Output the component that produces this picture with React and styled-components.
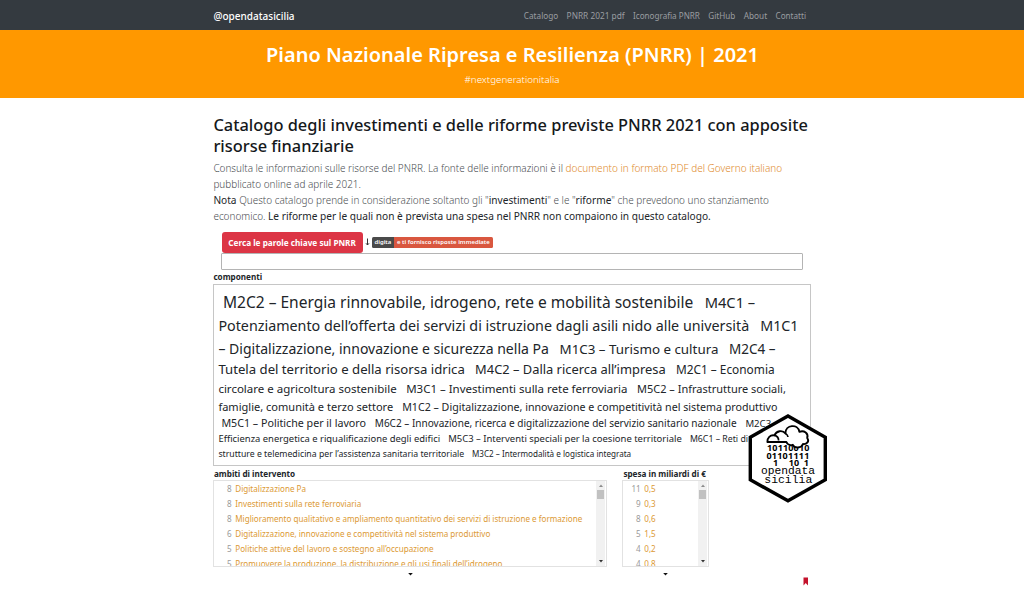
import React from "react";
import styled, { createGlobalStyle } from "styled-components";

const Global = createGlobalStyle`
  *, *::before, *::after { box-sizing: border-box; }
  body {
    margin: 0;
    background: #fff;
    color: #212529;
    font-family: "Noto Sans", "Open Sans", sans-serif;
    overflow: hidden;
  }
`;

const Page = styled.div`
  height: 589px;
  overflow: hidden;
`;

const NavBar = styled.nav`
  display: flex;
  justify-content: space-between;
  align-items: center;
  height: 30px;
  padding: 1px 218px 0 213.5px;
  background: #343a40;
`;

const Brand = styled.a`
  font-size: 10px;
  font-weight: 500;
  line-height: 14px;
  color: #fff;
`;

const NavLinks = styled.div`
  display: flex;
  gap: 8.4px;
`;

const NavLink = styled.a`
  font-size: ${(p) => p.$size || 8.2}px;
  line-height: 12px;
  color: #9a9da0;
  white-space: nowrap;
`;

const Banner = styled.header`
  height: 68px;
  padding-top: 11px;
  background: #ff9800;
  text-align: center;
  color: #fff;
`;

const BannerTitle = styled.h1`
  margin: 0;
  padding-left: 1px;
  font-size: 19.99px;
  font-weight: 600;
  line-height: 28px;
`;

const BannerTag = styled.p`
  margin: 4px 0 0;
  font-size: 9.8px;
  font-weight: 300;
  line-height: 14px;
`;

const Main = styled.main`
  width: 600px;
  margin: 17px 0 0 213.4px;
`;

const Heading = styled.h2`
  margin: 0;
  color: #15181b;
  font-size: ${(p) => p.$size || 16.4}px;
  font-weight: 500;
  line-height: 20.5px;
  white-space: nowrap;
`;

const Intro = styled.p`
  margin: 4px 0 0;
  font-size: 9.95px;
  font-weight: 300;
  line-height: 16px;
  color: #4a4e52;
  white-space: nowrap;
`;

const Em = styled.span`
  font-size: ${(p) => p.$size || 10.13}px;
  font-weight: 400;
  color: #212529;
`;

const SourceLink = styled.a`
  font-size: 10px;
  color: #e08a2c;
`;

const SearchHead = styled.div`
  display: flex;
  align-items: center;
  height: 21px;
  margin: 8px 0 0 8.2px;
`;

const SearchButton = styled.button`
  width: 141px;
  height: 21px;
  padding: 0;
  border: 0;
  border-radius: 3px;
  background: #dc3545;
  color: #fff;
  font: 700 8.2px/21px "Noto Sans", sans-serif;
  white-space: nowrap;
`;

const DownArrow = styled.svg`
  width: 5px;
  height: 8px;
  margin: 0 2px 2px 2.3px;
`;

const Badge = styled.span`
  display: flex;
  height: 11px;
  border-radius: 1.5px;
  overflow: hidden;
  font-size: 6px;
  font-weight: 600;
  line-height: 11px;
  color: #fff;
  white-space: nowrap;
`;

const BadgePart = styled.span`
  width: ${(p) => p.$width}px;
  background: ${(p) => p.$color};
  text-align: center;
`;

const SearchInput = styled.input`
  display: block;
  width: 582px;
  height: 17px;
  margin: 0 0 0 8px;
  border: 1px solid #b4b4b4;
  border-radius: 1px;
  background: #fff;
`;

const Label = styled.h3`
  margin: ${(p) => p.$top || 0}px 0 0;
  padding-left: ${(p) => p.$indent || 0}px;
  font-size: 8.15px;
  font-weight: 700;
  line-height: 11px;
  color: #212529;
  white-space: nowrap;
`;

const Cloud = styled.section`
  width: 598px;
  height: 182px;
  margin-top: 2px;
  padding: 9.6px 0 0 4px;
  border: 1px solid #c6c6c6;
`;

const CloudLine = styled.div`
  display: flex;
  align-items: baseline;
  gap: ${(p) => p.$gap}px;
  height: ${(p) => p.$height}px;
  padding-left: ${(p) => p.$indent || 0}px;
  white-space: nowrap;
`;

const Term = styled.a`
  font-size: ${(p) => p.$size}px;
  line-height: 1;
`;

const Facets = styled.div`
  display: flex;
  gap: 15px;
  margin-top: 2px;
`;

const Facet = styled.section`
  width: ${(p) => p.$width}px;
`;

const ListBox = styled.div`
  display: flex;
  justify-content: space-between;
  height: 87px;
  margin-top: 1px;
  padding-right: 1px;
  border: 1px solid #e2e2e2;
  overflow: hidden;
`;

const List = styled.ul`
  margin: 0;
  padding: 0;
  list-style: none;
`;

const Row = styled.li`
  display: flex;
  gap: 3.6px;
  height: 15px;
  font-size: 8.1px;
  line-height: 15px;
  color: #dc9a35;
  white-space: nowrap;
`;

const Count = styled.span`
  width: 17.3px;
  text-align: right;
  color: #9a9a9a;
`;

const Track = styled.div`
  display: flex;
  flex-direction: column;
  align-items: center;
  justify-content: space-between;
  width: 9px;
  padding: 3px 0 3px;
  background: #f1f1f1;
`;

const Thumb = styled.div`
  width: 7px;
  height: 9px;
  margin: 3px 0 auto;
  background: #c1c1c1;
`;

const Arrow = styled.svg`
  display: block;
  width: 4px;
  height: 3px;
`;

const Caret = styled.svg`
  display: block;
  width: 5px;
  height: 3px;
  margin: 6px auto 0;
`;

const HexLogo = styled.svg`
  position: absolute;
  left: 747px;
  top: 412px;
  width: 82px;
  height: 92px;
`;

const Bookmark = styled.svg`
  position: absolute;
  left: 803px;
  top: 577px;
  width: 6px;
  height: 9px;
`;

const cloud = [
  { height: 24.4, indent: 4.5, gap: 11.3, terms: [[15.56, "M2C2 – Energia rinnovabile, idrogeno, rete e mobilità sostenibile"], [14.7, "M4C1 –"]] },
  { height: 22.7, gap: 11, terms: [[14.3, "Potenziamento dell’offerta dei servizi di istruzione dagli asili nido alle università"], [14.3, "M1C1"]] },
  { height: 21.7, gap: 10.7, terms: [[14.02, "– Digitalizzazione, innovazione e sicurezza nella Pa"], [13.36, "M1C3 – Turismo e cultura"], [13.5, "M2C4 –"]] },
  { height: 19.8, gap: 10.3, terms: [[13.17, "Tutela del territorio e della risorsa idrica"], [12.89, "M4C2 – Dalla ricerca all’impresa"], [11.86, "M2C1 – Economia"]] },
  { height: 18.2, gap: 9.6, terms: [[11.49, "circolare e agricoltura sostenibile"], [11.49, "M3C1 – Investimenti sulla rete ferroviaria"], [10.99, "M5C2 – Infrastrutture sociali,"]] },
  { height: 16.8, gap: 9, terms: [[11.04, "famiglie, comunità e terzo settore"], [10.66, "M1C2 – Digitalizzazione, innovazione e competitività nel sistema produttivo"]] },
  { height: 16, indent: 3, gap: 8.8, terms: [[10.7, "M5C1 – Politiche per il lavoro"], [10.04, "M6C2 – Innovazione, ricerca e digitalizzazione del servizio sanitario nazionale"], [9.6, "M2C3 –"]] },
  { height: 15.4, gap: 8.2, terms: [[9.43, "Efficienza energetica e riqualificazione degli edifici"], [9.46, "M5C3 – Interventi speciali per la coesione territoriale"], [8.75, "M6C1 – Reti di"]] },
  { height: 14, gap: 7.8, terms: [[8.71, "strutture e telemedicina per l’assistenza sanitaria territoriale"], [8.1, "M3C2 – Intermodalità e logistica integrata"]] },
];

const areas = [
  [8, "Digitalizzazione Pa"],
  [8, "Investimenti sulla rete ferroviaria"],
  [8, "Miglioramento qualitativo e ampliamento quantitativo dei servizi di istruzione e formazione"],
  [6, "Digitalizzazione, innovazione e competitività nel sistema produttivo"],
  [5, "Politiche attive del lavoro e sostegno all’occupazione"],
  [5, "Promuovere la produzione, la distribuzione e gli usi finali dell’idrogeno"],
];

const amounts = [[11, "0,5"], [9, "0,3"], [8, "0,6"], [5, "1,5"], [4, "0,2"], [4, "0,8"]];

const FacetList = ({ label, width, indent, rows }) => (
  <Facet $width={width}>
    <Label $indent={indent}>{label}</Label>
    <ListBox>
      <List>
        {rows.map(([count, name], i) => (
          <Row key={i}>
            <Count>{count}</Count>
            {name}
          </Row>
        ))}
      </List>
      <Track>
        <Arrow viewBox="0 0 4 3"><path d="M0 3 2 .5 4 3Z" fill="#8c8c8c" /></Arrow>
        <Thumb />
        <Arrow viewBox="0 0 4 3"><path d="M0 0 2 2.5 4 0Z" fill="#333" /></Arrow>
      </Track>
    </ListBox>
    <Caret viewBox="0 0 5 3"><path d="M.2 0 2.5 2.6 4.8 0Z" fill="#111" /></Caret>
  </Facet>
);

const Logo = () => (
  <HexLogo viewBox="0 0 82 92">
    <path d="M41 4 78.3 25.2V67.8L41 88.8 3.3 67.8V25.2Z" fill="#fff" stroke="#000" strokeWidth="3.4" />
    <g fontFamily="Noto Sans, sans-serif" fontWeight="700" fontSize="9" fill="#000">
      <text x="20" y="38.9" textLength="42.4" lengthAdjust="spacing">10110010</text>
      <text x="19.4" y="46.6" textLength="43" lengthAdjust="spacing">01101111</text>
      <text x="26" y="54.1">1</text>
      <text x="41.8" y="54.1">10</text>
      <text x="56.8" y="54.1">1</text>
    </g>
    <path
      d="M20.4 30C20 25.8 23.4 22.6 27.4 23.4 29.4 18.8 35.4 17.6 38.4 21.4 C38.4 12.6 51 11.4 52.4 19.8 57.2 18 61.8 21.4 60.2 26 62.6 29 60 32.6 56 32 54.4 36.4 47.4 36.6 45.8 32.8 42.6 33.6 40 32 39.4 30Z"
      fill="#fff" stroke="#000" strokeWidth="1.9" strokeLinejoin="round"
    />
    <path d="M27.4 23.4C30 24 31.6 26 31.6 28.4M38.4 21.4C40 22.4 40.8 23.4 41 25" fill="none" stroke="#000" strokeWidth="1.7" />
    <g fontFamily="Liberation Mono, monospace" fontSize="11" fill="#000">
      <text x="14" y="62" textLength="54" lengthAdjust="spacingAndGlyphs">opendata</text>
      <text x="17.3" y="71" textLength="48" lengthAdjust="spacingAndGlyphs">sicilia</text>
    </g>
  </HexLogo>
);

export default function App() {
  return (
    <Page>
      <Global />
      <NavBar>
        <Brand>@opendatasicilia</Brand>
        <NavLinks>
          <NavLink $size={8.2}>Catalogo</NavLink>
          <NavLink $size={8.3}>PNRR 2021 pdf</NavLink>
          <NavLink $size={8.12}>Iconografia PNRR</NavLink>
          <NavLink $size={8.13}>GitHub</NavLink>
          <NavLink $size={8.28}>About</NavLink>
          <NavLink $size={8.12}>Contatti</NavLink>
        </NavLinks>
      </NavBar>
      <Banner>
        <BannerTitle>Piano Nazionale Ripresa e Resilienza (PNRR) | 2021</BannerTitle>
        <BannerTag>#nextgenerationitalia</BannerTag>
      </Banner>
      <Main>
        <Heading>
          Catalogo degli investimenti e delle riforme previste PNRR 2021 con apposite
          <br />
          risorse finanziarie
        </Heading>
        <Intro>
          Consulta le informazioni sulle risorse del PNRR. La fonte delle informazioni è il{" "}
          <SourceLink>documento in formato PDF del Governo italiano</SourceLink>
          <br />
          pubblicato online ad aprile 2021.
          <br />
          <Em>Nota</Em> Questo catalogo prende in considerazione soltanto gli "<Em>investimenti</Em>" e le "
          <Em>riforme</Em>" che prevedono uno stanziamento
          <br />
          economico. <Em>Le riforme per le quali non è prevista una spesa nel PNRR non compaiono in questo catalogo.</Em>
        </Intro>
        <SearchHead>
          <SearchButton>Cerca le parole chiave sul PNRR</SearchButton>
          <DownArrow viewBox="0 0 5 8"><path d="M2.5 .5V7M1 5.3 2.5 7 4 5.3" fill="none" stroke="#333" /></DownArrow>
          <Badge>
            <BadgePart $width={22} $color="#4a4a4a">digita</BadgePart>
            <BadgePart $width={99} $color="#d9573f">e ti fornisco risposte immediate</BadgePart>
          </Badge>
        </SearchHead>
        <SearchInput />
        <Label $top={1}>componenti</Label>
        <Cloud>
          {cloud.map((line, i) => (
            <CloudLine key={i} $height={line.height} $gap={line.gap} $indent={line.indent}>
              {line.terms.map(([size, text]) => (
                <Term key={text} $size={size}>{text}</Term>
              ))}
            </CloudLine>
          ))}
        </Cloud>
        <Facets>
          <FacetList label="ambiti di intervento" width={394} indent={0.6} rows={areas} />
          <FacetList label="spesa in miliardi di €" width={87} indent={1} rows={amounts} />
        </Facets>
      </Main>
      <Logo />
      <Bookmark viewBox="0 0 6 9"><path d="M.5 .5H5V8.5L2.75 6 .5 8.5Z" fill="#c4122c" /></Bookmark>
    </Page>
  );
}
